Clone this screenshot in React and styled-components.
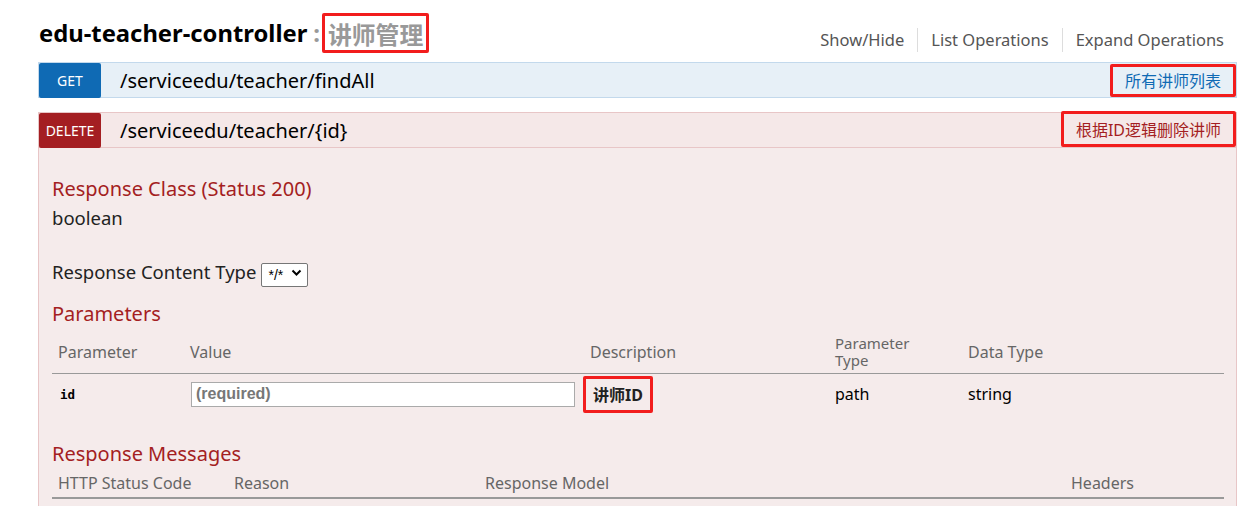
import React from "react";
import styled, { createGlobalStyle } from "styled-components";

const GlobalStyle = createGlobalStyle`
  body {
    margin: 0;
    background: #fff;
    font-family: "Noto Sans", "Noto Sans CJK SC", sans-serif;
    color: #222;
  }
`;

const Page = styled.div`
  width: 1199px;
  padding-left: 38px;
`;

const Header = styled.div`
  height: 62px;
  display: flex;
  align-items: flex-start;
  justify-content: space-between;
`;

const Title = styled.h2`
  margin: 13px 0 0 1px;
  display: flex;
  align-items: center;
  font-size: 23.8px;
  font-weight: 700;
  color: #000;
  height: 40px;
`;

const Colon = styled.span`
  color: #999;
  margin: 0 2px 0 6px;
`;

const RedBox = styled.span`
  display: inline-flex;
  align-items: center;
  box-sizing: border-box;
  border: 3px solid #f21d1d;
  border-radius: 2px;
  height: ${(p) => p.$h || 32}px;
  padding: 0 ${(p) => p.$px || 10}px;
  margin-top: ${(p) => p.$mt || 0}px;
`;

const TitleNote = styled.span`
  color: #999;
  font-weight: 700;
`;

const Links = styled.ul`
  list-style: none;
  display: flex;
  margin: 28px 0 0;
  padding: 0;
`;

const LinkItem = styled.li`
  font-size: 16.5px;
  color: #555;
  padding: 0 13px;
  line-height: 24px;
  border-left: ${(p) => (p.$first ? "none" : "1px solid #ddd")};
`;

const OpRow = styled.div`
  display: flex;
  align-items: center;
  height: 34px;
  background: ${(p) => p.$bg};
  border: 1px solid ${(p) => p.$line};
  margin-top: ${(p) => p.$mt || 0}px;
`;

const Method = styled.span`
  width: 62px;
  height: 35px;
  margin: -1px 0;
  border-radius: 2px;
  background: ${(p) => p.$color};
  color: #fff;
  font-size: 14px;
  display: flex;
  align-items: center;
  justify-content: center;
`;

const Path = styled.span`
  margin-left: 19px;
  font-size: 20px;
  color: #000;
`;

const Summary = styled.span`
  margin-left: auto;
  font-size: 16px;
  color: ${(p) => p.$color};
`;

const Content = styled.div`
  background: #f5ebeb;
  border: 1px solid #e8c6c7;
  border-top: none;
  padding: 28px 12px 30px 13px;
`;

const SectionTitle = styled.h4`
  margin: ${(p) => p.$mt || 0}px 0 0;
  font-size: 20px;
  font-weight: 400;
  color: #a41e22;
  line-height: 26px;
`;

const Plain = styled.div`
  font-size: 18.5px;
  color: #222;
  line-height: 26px;
  margin-top: ${(p) => p.$mt || 0}px;
  display: flex;
  align-items: center;
`;

const SelectWrap = styled.span`
  position: relative;
  display: inline-block;
  margin-left: 5px;
  height: 24px;
`;

const Select = styled.select`
  appearance: none;
  width: 47px;
  height: 24px;
  border: 1px solid #767676;
  border-radius: 2px;
  background: #fff;
  font-family: "Liberation Sans", sans-serif;
  font-size: 14px;
  padding: 0 0 0 6px;
  color: #000;
`;

const Chevron = styled.svg`
  position: absolute;
  right: 6px;
  top: 9px;
  pointer-events: none;
`;

const Grid = styled.div`
  display: grid;
  grid-template-columns: ${(p) => p.$cols};
  border-bottom: ${(p) => p.$rule || "none"};
  height: ${(p) => p.$h}px;
  align-items: ${(p) => p.$align || "center"};
  text-align: left;
`;

const Th = styled.div`
  font-size: ${(p) => (p.$tight ? 15 : 16)}px;
  color: #666;
  padding-left: 6px;
  line-height: ${(p) => (p.$tight ? "16.5px" : "22px")};
  padding-bottom: ${(p) => p.$pb || 0}px;
`;

const Td = styled.div`
  padding-left: ${(p) => (p.$flush ? 0 : 6)}px;
  margin-left: ${(p) => (p.$flush ? -1 : 0)}px;
  font-size: 16px;
  color: #000;
  display: flex;
  align-items: center;
`;

const Code = styled.span`
  font-family: "DejaVu Sans Mono", monospace;
  font-weight: 700;
  font-size: 12.5px;
  margin-left: 2px;
`;

const Input = styled.input`
  box-sizing: border-box;
  width: 384px;
  height: 25px;
  margin-left: 1px;
  border: 1px solid #aaa;
  background: #fff;
  font-family: "Liberation Sans", sans-serif;
  font-size: 16px;
  font-weight: 700;
  padding: 0 4px;
  &::placeholder {
    color: #777;
  }
`;

const Bold = styled.span`
  font-weight: 700;
  font-size: 16px;
  color: #222;
`;

const paramCols = "132px 400px 245px 133px 1fr";
const msgCols = "176px 251px 586px 1fr";

export default function App() {
  return (
    <Page>
      <GlobalStyle />
      <Header>
        <Title>
          edu-teacher-controller
          <Colon>:</Colon>
          <RedBox $h={40} $px={3}>
            <TitleNote>讲师管理</TitleNote>
          </RedBox>
        </Title>
        <Links>
          <LinkItem $first>Show/Hide</LinkItem>
          <LinkItem>List Operations</LinkItem>
          <LinkItem>Expand Operations</LinkItem>
        </Links>
      </Header>

      <OpRow $bg="#e7f0f7" $line="#c3d9ec">
        <Method $color="#0f6ab4">GET</Method>
        <Path>/serviceedu/teacher/findAll</Path>
        <Summary $color="#0f6ab4">
          <RedBox $h={33} $px={12}>所有讲师列表</RedBox>
        </Summary>
      </OpRow>

      <OpRow $bg="#f5e8e8" $line="#e8c6c7" $mt={14}>
        <Method $color="#a41e22">DELETE</Method>
        <Path>/serviceedu/teacher/{"{id}"}</Path>
        <Summary $color="#a41e22">
          <RedBox $h={36} $px={12} $mt={-3}>
            根据ID逻辑删除讲师
          </RedBox>
        </Summary>
      </OpRow>

      <Content>
        <SectionTitle>Response Class (Status 200)</SectionTitle>
        <Plain $mt={3}>boolean</Plain>
        <Plain $mt={28}>
          Response Content Type
          <SelectWrap>
            <Select defaultValue="*/*">
              <option>*/*</option>
            </Select>
            <Chevron width="11" height="8" viewBox="0 0 11 8">
              <path d="M1.5 1.5 L5.5 5.5 L9.5 1.5" fill="none" stroke="#000" strokeWidth="2" />
            </Chevron>
          </SelectWrap>
        </Plain>
        <SectionTitle $mt={16}>Parameters</SectionTitle>

        <Grid $cols={paramCols} $h={46} $align="end" $rule="1px solid #999">
          <Th $pb={10}>Parameter</Th>
          <Th $pb={10}>Value</Th>
          <Th $pb={10}>Description</Th>
          <Th $tight $pb={5}>
            Parameter
            <br />
            Type
          </Th>
          <Th $pb={10}>Data Type</Th>
        </Grid>
        <Grid $cols={paramCols} $h={40}>
          <Td>
            <Code>id</Code>
          </Td>
          <Td>
            <Input placeholder="(required)" />
          </Td>
          <Td $flush>
            <RedBox $h={37} $px={7}>
              <Bold>讲师ID</Bold>
            </RedBox>
          </Td>
          <Td>path</Td>
          <Td>string</Td>
        </Grid>

        <SectionTitle $mt={27}>Response Messages</SectionTitle>
        <Grid $cols={msgCols} $h={30} $rule="2px solid #999" $align="end">
          <Th $pb={3}>HTTP Status Code</Th>
          <Th $pb={3}>Reason</Th>
          <Th $pb={3}>Response Model</Th>
          <Th $pb={3}>Headers</Th>
        </Grid>
      </Content>
    </Page>
  );
}
